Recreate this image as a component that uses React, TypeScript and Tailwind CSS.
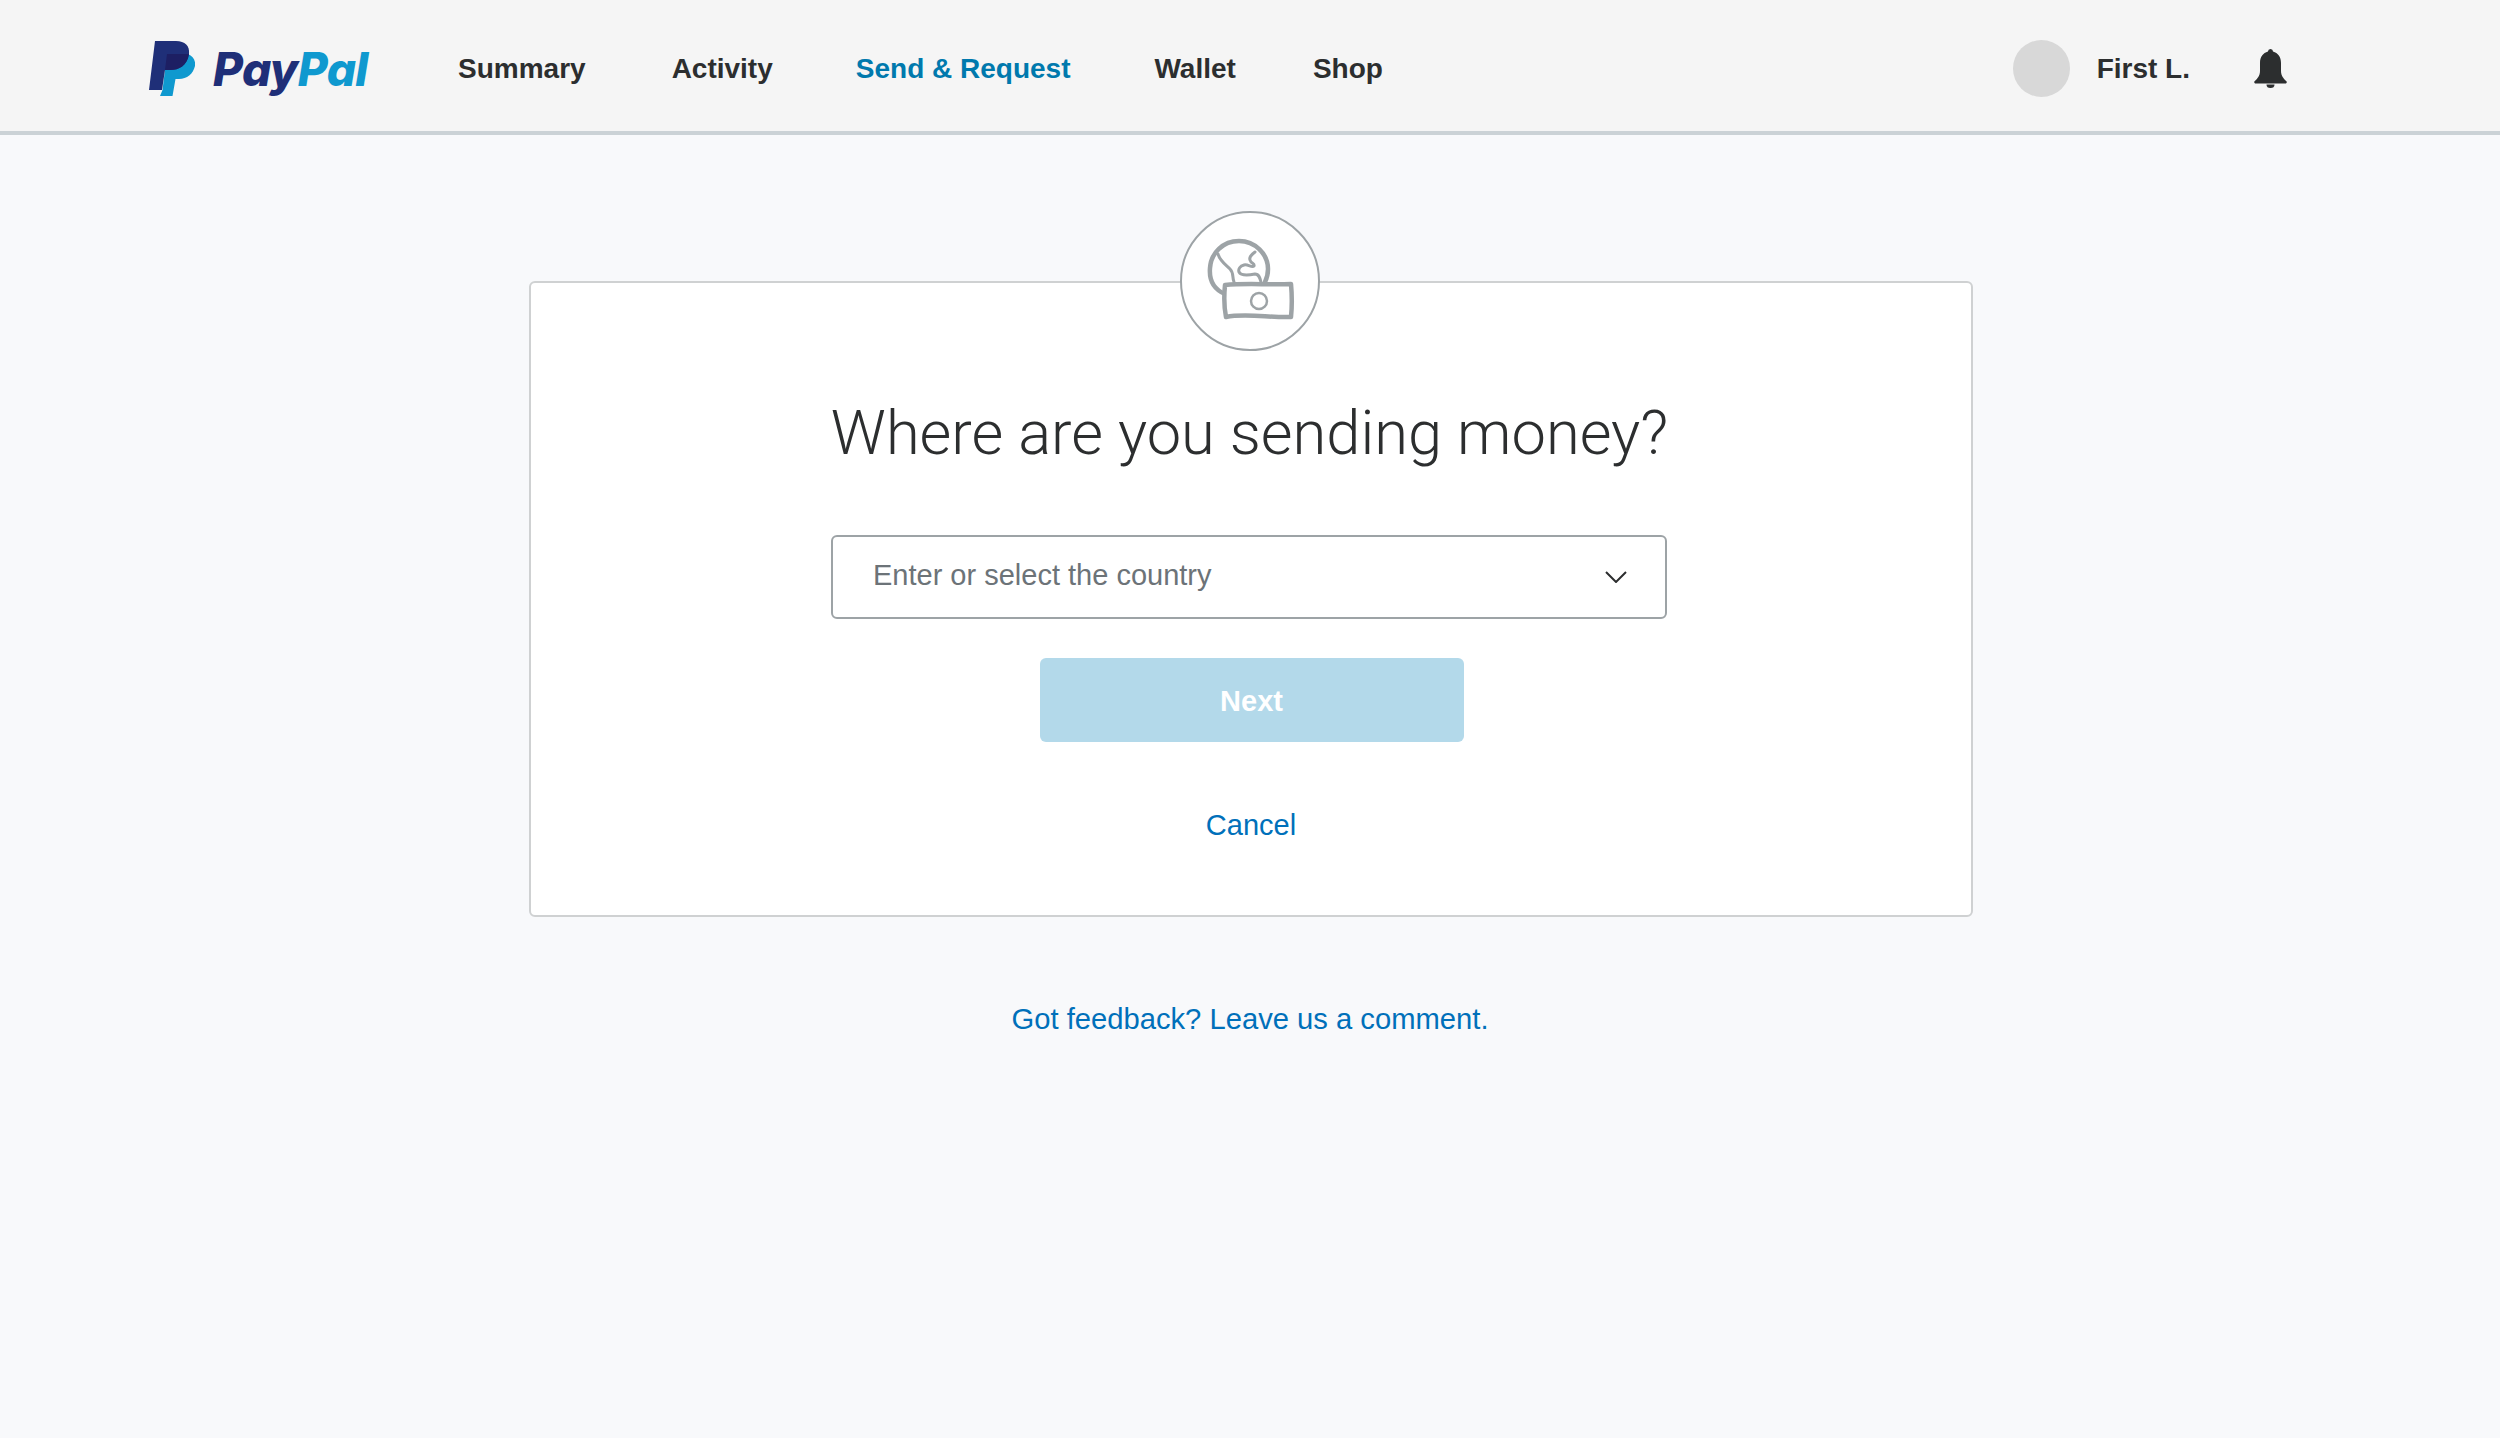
const navItems = [
  { label: "Summary", cls: "ml-[87px] text-[#2c2e2f]" },
  { label: "Activity", cls: "ml-[86px] text-[#2c2e2f]" },
  { label: "Send & Request", cls: "ml-[83px] text-[#0079ad]" },
  { label: "Wallet", cls: "ml-[84px] text-[#2c2e2f]" },
  { label: "Shop", cls: "ml-[77px] text-[#2c2e2f]" },
];

function LogoMark() {
  return (
    <svg width="46" height="55" viewBox="0 0 46 55" className="shrink-0">
      <path d="M18 13H39C44 15 47 20 46 25C44 33 38 38 30 38H26.5L23.5 55H11L13.5 49Z" fill="#0f99cf" />
      <path d="M6 0H27C36 0 41 5 40 13C38 25 30 29 21 29H16L13 49H0Z" fill="#1f2f78" />
      <path d="M18 13H40C38 25 30 29 21 29H16Z" fill="#1d1f63" />
    </svg>
  );
}

function GlobeIcon() {
  return (
    <svg width="140" height="140" viewBox="0 0 140 140" fill="none" stroke="#9da3a6" strokeLinecap="round" strokeLinejoin="round" className="absolute left-0 top-0">
      <path d="M45 83C33 78 29 69 30 57C31 42 43 30 59 30C75 30 88 43 88 58C88 63 87 67 85 71" strokeWidth="4.5" />
      <path d="M38 43C40 50 46 54 50 58C54 62 52 66 54 71" strokeWidth="3" />
      <path d="M75 41C71 44 69 46 70 49C71 53 75 52 74 55C72 57 68 53 64 54C60 55 58 58 59 61C61 65 70 64 75 63C79 63 80 67 81 71" strokeWidth="3" />
      <path d="M45 74C66 72 88 74 111 73C112 84 112 96 111 106C90 107 66 102 46 106C44 96 44 84 45 74Z" fill="#ffffff" strokeWidth="4.5" />
      <circle cx="79" cy="90" r="8" strokeWidth="2.5" />
    </svg>
  );
}

export default function App() {
  return (
    <div className="min-h-[1438px] bg-[#f8f9fb] font-['Liberation_Sans',Arial,sans-serif] text-[29px]">
      <header className="flex h-[135px] items-center border-b-[4px] border-[#cbd2d6] bg-[#f5f5f5] pl-[149px] pr-[213px] pt-[6px] text-[28px]">
        <LogoMark />
        <span className="ml-[18px] w-[158px] whitespace-nowrap font-['Inter',sans-serif] text-[46px] font-extrabold italic leading-none tracking-[-0.6px]">
          <span className="text-[#1f2f78]">Pay</span>
          <span className="text-[#0f99cf]">Pal</span>
        </span>
        {navItems.map((n) => (
          <a key={n.label} className={`whitespace-nowrap font-bold ${n.cls}`}>
            {n.label}
          </a>
        ))}
        <div className="ml-auto flex items-center">
          <div className="h-[57px] w-[57px] rounded-full bg-[#d8d8d8]" />
          <span className="ml-[27px] font-bold text-[#2c2e2f]">First L.</span>
          <svg width="33" height="39" viewBox="0 0 33 39" className="ml-[64px]" fill="#2c2e2f">
            <path d="M16.5 0A2.6 2.6 0 0 1 19 2.6C24 4 27 8 27 14V22C27 27 30 30 33 33L32 34.5H1L0 33C3 30 6 27 6 22V14C6 8 9 4 14 2.6A2.6 2.6 0 0 1 16.5 0Z" />
            <path d="M12.5 35.5H20.5A4 3.5 0 0 1 12.5 35.5Z" />
          </svg>
        </div>
      </header>

      <main className="flex flex-col items-center pl-[2px]">
        <section className="relative mt-[146px] flex h-[636px] w-[1444px] flex-col items-center rounded-[6px] border-2 border-[#cfd1d2] bg-white">
          <div className="absolute left-[649px] top-[-72px] h-[140px] w-[140px] rounded-full border-2 border-[#9da3a6] bg-white">
            <div className="relative -m-[2px] h-[140px] w-[140px]">
              <GlobeIcon />
            </div>
          </div>
          <h1 className="mr-[3px] mt-[112px] whitespace-nowrap font-['Roboto',sans-serif] text-[61.4px] font-light leading-[76px] text-[#2c2e2f]">
            Where are you sending money?
          </h1>
          <div className="mr-[4px] mt-[64px] flex h-[84px] w-[836px] items-center justify-between rounded-[6px] border-2 border-[#9da3a6] pl-[40px] pr-[38px]">
            <span className="-mt-[2px] text-[#6c7378]">Enter or select the country</span>
            <svg width="22" height="12" viewBox="0 0 22 12" fill="none" stroke="#2c2e2f" strokeWidth="2">
              <path d="M1 1L11 11L21 1" />
            </svg>
          </div>
          <button className="ml-[1px] mt-[39px] flex h-[84px] w-[424px] items-center justify-center rounded-[6px] bg-[#b3d9ea] pt-[4px] font-bold text-white">
            Next
          </button>
          <a className="mt-[62px] text-[#0070ba]">Cancel</a>
        </section>
        <a className="mr-[2px] mt-[81px] text-[29.2px] text-[#0070ba]">Got feedback? Leave us a comment.</a>
      </main>
    </div>
  );
}
